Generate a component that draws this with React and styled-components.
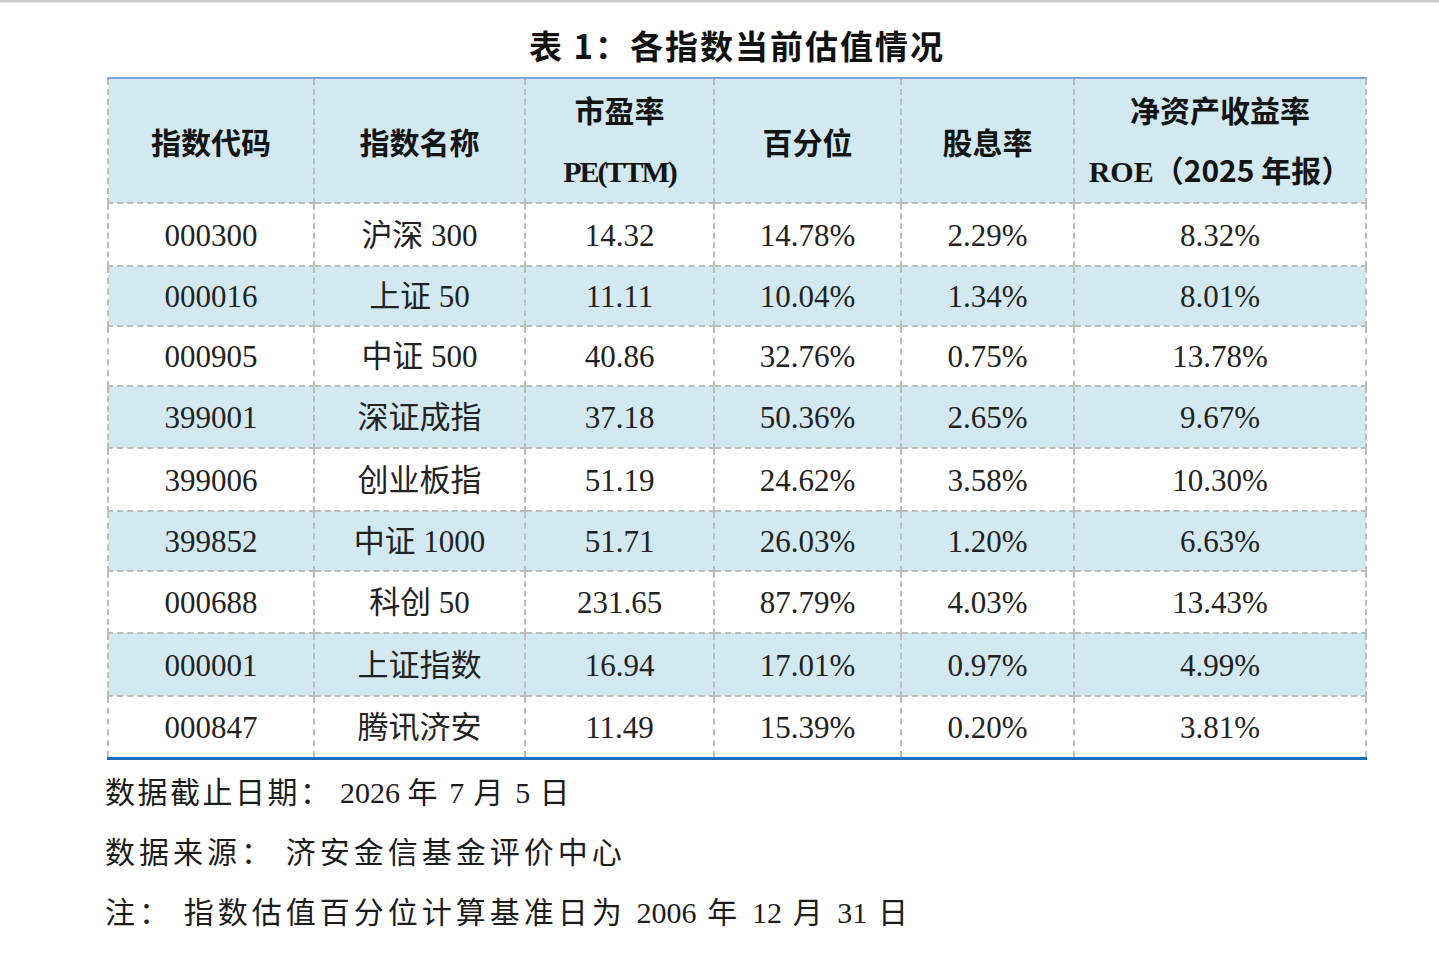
import styled, { createGlobalStyle } from 'styled-components'

const GlobalStyle = createGlobalStyle`
    body {
        margin: 0;
        background: #ffffff;
        font-family: "Liberation Serif", "Noto Sans CJK SC", serif;
        color: #1f1f1f;
    }
`

const TopRule = styled.div`
    height: 3px;
    background: linear-gradient(#bdbdbd, #e6e6e6);
`

const Sheet = styled.div`
    width: 1258px;
    margin-left: 107px;
`

const Title = styled.h1`
    margin: 0;
    padding-top: 12px;
    height: 62px;
    line-height: 60px;
    text-align: center;
    font-family: "Noto Sans CJK SC", sans-serif;
    font-weight: 700;
    font-size: 33px;
    letter-spacing: 2px;
    color: #111;
    padding-left: 2px;
`

const Table = styled.table`
    width: 100%;
    table-layout: fixed;
    border-collapse: collapse;
    border-top: 2px solid #7fa6d6;
    border-bottom: 3px solid #1b6ec0;
`

const Head = styled.th`
    height: 123px;
    padding: 0;
    background: #d3e9f2;
    border: 2px dashed #bcbcbc;
    border-top: 2px solid #7fa6d6;
    font-family: "Noto Sans CJK SC", sans-serif;
    font-weight: 700;
    font-size: 30px;
    color: #141414;
    line-height: 60px;
    vertical-align: middle;
`

const Latin = styled.span`
    font-family: "Liberation Serif", serif;
    letter-spacing: ${p => p.$tight ? '-2px' : '0'};
    font-weight: 700;
`

const Row = styled.tr`
    height: ${p => p.$h}px;
    background: ${p => p.$shade ? '#d3e9f2' : '#ffffff'};
`

const Cell = styled.td`
    padding: 2px 0 0;
    border: 2px dashed #bcbcbc;
    text-align: center;
    vertical-align: middle;
    font-family: "Liberation Serif", "Noto Sans CJK SC", serif;
    font-size: 31px;
    line-height: 36px;
    color: #222;
    tr:last-child > & {
        border-bottom: 3px solid #1b6ec0;
    }
`

const Notes = styled.div`
    margin-top: 0;
    margin-left: -2px;
`

const Note = styled.p`
    margin: 0;
    height: 60px;
    line-height: 60px;
    font-family: "Noto Sans CJK SC", sans-serif;
    font-size: 30px;
    letter-spacing: ${p => p.$gap ?? 4}px;
    color: #1c1c1c;
    white-space: pre;
`

const Num = styled.span`
    font-family: "Liberation Serif", serif;
    letter-spacing: 0;
`

const columns = [206, 211, 189, 187, 173, 292]

const rows = [
    ['000300', '沪深 300', '14.32', '14.78%', '2.29%', '8.32%', 63],
    ['000016', '上证 50', '11.11', '10.04%', '1.34%', '8.01%', 60],
    ['000905', '中证 500', '40.86', '32.76%', '0.75%', '13.78%', 60],
    ['399001', '深证成指', '37.18', '50.36%', '2.65%', '9.67%', 62],
    ['399006', '创业板指', '51.19', '24.62%', '3.58%', '10.30%', 63],
    ['399852', '中证 1000', '51.71', '26.03%', '1.20%', '6.63%', 60],
    ['000688', '科创 50', '231.65', '87.79%', '4.03%', '13.43%', 62],
    ['000001', '上证指数', '16.94', '17.01%', '0.97%', '4.99%', 63],
    ['000847', '腾讯济安', '11.49', '15.39%', '0.20%', '3.81%', 62],
]

const App = () => {
    return (<>
        <GlobalStyle />
        <TopRule />
        <Sheet>
            <Title>表 1：各指数当前估值情况</Title>
            <Table>
                <colgroup>
                    {columns.map((w, i) => <col key={i} style={{ width: w }} />)}
                </colgroup>
                <thead>
                    <tr>
                        <Head>指数代码</Head>
                        <Head>指数名称</Head>
                        <Head>市盈率<br /><Latin $tight>PE(TTM)</Latin></Head>
                        <Head>百分位</Head>
                        <Head>股息率</Head>
                        <Head>净资产收益率<br /><Latin>ROE</Latin>（2025 年报）</Head>
                    </tr>
                </thead>
                <tbody>
                    {rows.map((r, i) => (
                        <Row key={r[0]} $h={r[6]} $shade={i % 2 === 1}>
                            {r.slice(0, 6).map((v, j) => <Cell key={j}>{v}</Cell>)}
                        </Row>
                    ))}
                </tbody>
            </Table>
            <Notes>
                <Note $gap={2.5}>数据截止日期：<Num> 2026 </Num>年 <Num>7</Num> 月 <Num>5</Num> 日</Note>
                <Note>数据来源： 济安金信基金评价中心</Note>
                <Note>注： 指数估值百分位计算基准日为 <Num>2006</Num> 年 <Num>12</Num> 月 <Num>31</Num> 日</Note>
            </Notes>
        </Sheet>
    </>)
}

export default App
